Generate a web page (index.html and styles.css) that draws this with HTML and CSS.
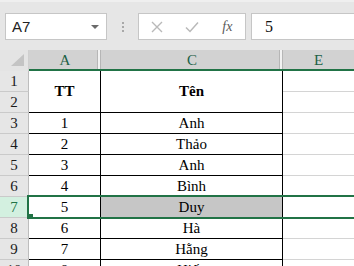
FILE: index.html
```html
<!DOCTYPE html>
<html>
<head>
<meta charset="utf-8">
<link rel="stylesheet" href="styles.css">
</head>
<body>
<div class="app">
  <div class="topbar">
    <div class="namebox"><span class="ref">A7</span><span class="caret"></span></div>
    <div class="sep"><i></i><i></i><i></i></div>
    <div class="fbtns">
      <span class="fbtn"><svg width="12" height="12" viewBox="0 0 12 12"><path d="M1 1L11 11M11 1L1 11" stroke="#b9b9b9" stroke-width="1.4" fill="none"/></svg></span>
      <span class="fbtn"><svg width="14" height="12" viewBox="0 0 14 12"><path d="M1 6.5L5 10.5L13 1.5" stroke="#b9b9b9" stroke-width="1.5" fill="none"/></svg></span>
      <span class="fbtn fx">fx</span>
    </div>
    <div class="fbox">5</div>
  </div>
  <div class="sheet">
    <div class="grid">
      <div class="corner"><svg width="13" height="12" viewBox="0 0 13 12"><path d="M13 0V12H0Z" fill="#c4c4c4"/></svg></div>
      <div class="ch chA">A</div>
      <div class="ch chC">C</div>
      <div class="ch chE">E</div>

      <div class="rh">1</div>
      <div class="cell a merge bold">TT</div>
      <div class="cell c merge bold">Tên</div>
      <div class="cell e"></div>

      <div class="rh">2</div>
      <div class="cell e"></div>

      <div class="rh">3</div><div class="cell a">1</div><div class="cell c">Anh</div><div class="cell e"></div>
      <div class="rh">4</div><div class="cell a">2</div><div class="cell c">Thảo</div><div class="cell e"></div>
      <div class="rh">5</div><div class="cell a">3</div><div class="cell c">Anh</div><div class="cell e"></div>
      <div class="rh">6</div><div class="cell a">4</div><div class="cell c">Bình</div><div class="cell e"></div>
      <div class="rh active">7</div><div class="cell a">5</div><div class="cell c filled">Duy</div><div class="cell e"></div>
      <div class="rh">8</div><div class="cell a">6</div><div class="cell c">Hà</div><div class="cell e"></div>
      <div class="rh">9</div><div class="cell a">7</div><div class="cell c">Hằng</div><div class="cell e"></div>
      <div class="rh">10</div><div class="cell a">8</div><div class="cell c">Hiếu</div><div class="cell e"></div>
    </div>
    <div class="selection"><span class="handle"></span></div>
  </div>
</div>
</body>
</html>
```

FILE: styles.css
```css
html, body {
  margin: 0;
  padding: 0;
  overflow: hidden;
  background: #ffffff;
}

.app {
  width: 354px;
  height: 266px;
  overflow: hidden;
  font-family: "Liberation Serif", "Times New Roman", serif;
}

.topbar {
  height: 50px;
  box-sizing: border-box;
  background: #e6e6e6;
  border-top: 2px solid #efefef;
  padding: 11px 0 0 5px;
  display: flex;
  align-items: flex-start;
}

.namebox {
  width: 102px;
  height: 27px;
  box-sizing: border-box;
  background: #ffffff;
  border: 1px solid #c6c6c6;
  display: flex;
  align-items: center;
  justify-content: space-between;
  padding: 0 7px 0 6px;
}

.ref {
  font-family: "Liberation Sans", Arial, sans-serif;
  font-size: 15px;
  color: #222;
}

.caret {
  width: 0;
  height: 0;
  border-left: 4px solid transparent;
  border-right: 4px solid transparent;
  border-top: 4px solid #6a6a6a;
}

.sep {
  width: 31px;
  height: 27px;
  display: flex;
  flex-direction: column;
  align-items: center;
  justify-content: center;
  gap: 2px;
}

.sep i {
  width: 2px;
  height: 2px;
  background: #a8a8a8;
}

.fbtns {
  width: 108px;
  height: 27px;
  box-sizing: border-box;
  background: #ffffff;
  border: 1px solid #c6c6c6;
  display: flex;
}

.fbtn {
  width: 36px;
  display: flex;
  align-items: center;
  justify-content: center;
}

.fx {
  font-family: "Liberation Serif", serif;
  font-style: italic;
  font-size: 14px;
  color: #5a5a5a;
}

.fbox {
  flex: 1;
  margin-left: 5px;
  margin-right: -6px;
  height: 27px;
  box-sizing: border-box;
  background: #ffffff;
  border: 1px solid #c6c6c6;
  padding-left: 13px;
  display: flex;
  align-items: center;
  font-size: 16px;
  color: #111;
}

.sheet {
  position: relative;
}

.grid {
  display: grid;
  grid-template-columns: 29px 72px 182px 71px;
  grid-auto-rows: 21px;
  font-size: 15px;
  color: #000;
}

.grid > div {
  box-sizing: border-box;
  display: flex;
  align-items: center;
  justify-content: center;
}

.corner {
  background: #e4e4e4;
  justify-content: flex-end !important;
  align-items: flex-end !important;
  padding: 0 4px 5px 0;
  border-right: 1px solid #cfcfcf;
}

.ch {
  background: #d2d2d2;
  border-bottom: 2px solid #217346;
  color: #1d6146;
  padding-top: 1px;
}

.chA {
  box-shadow: inset -1px 0 #b6b6b6, inset -3px 0 #f2f2f2, inset -4px 0 #b6b6b6;
}

.chC {
  box-shadow: inset -1px 0 #b6b6b6, inset -3px 0 #f2f2f2, inset -4px 0 #b6b6b6;
}

.rh {
  background: #e6e6e6;
  border-bottom: 1px solid #cacaca;
  border-right: 1px solid #bdbdbd;
  color: #1a1a1a;
}

.rh.active {
  background: #d3f0e0;
  color: #217346;
}

.cell.a, .cell.c {
  border-right: 1px solid #000;
  border-bottom: 1px solid #000;
}

.cell.e {
  border-bottom: 1px solid #d4d4d4;
}

.merge {
  grid-row: span 2;
}

.bold {
  font-weight: bold;
}

.filled {
  background: #c6c6c6;
}

.selection {
  position: absolute;
  left: 27px;
  top: 145px;
  width: 340px;
  height: 24px;
  box-sizing: border-box;
  border: 2px solid #217346;
  border-right: none;
}

.handle {
  position: absolute;
  left: -1px;
  bottom: -2px;
  width: 5px;
  height: 5px;
  background: #217346;
}
```
